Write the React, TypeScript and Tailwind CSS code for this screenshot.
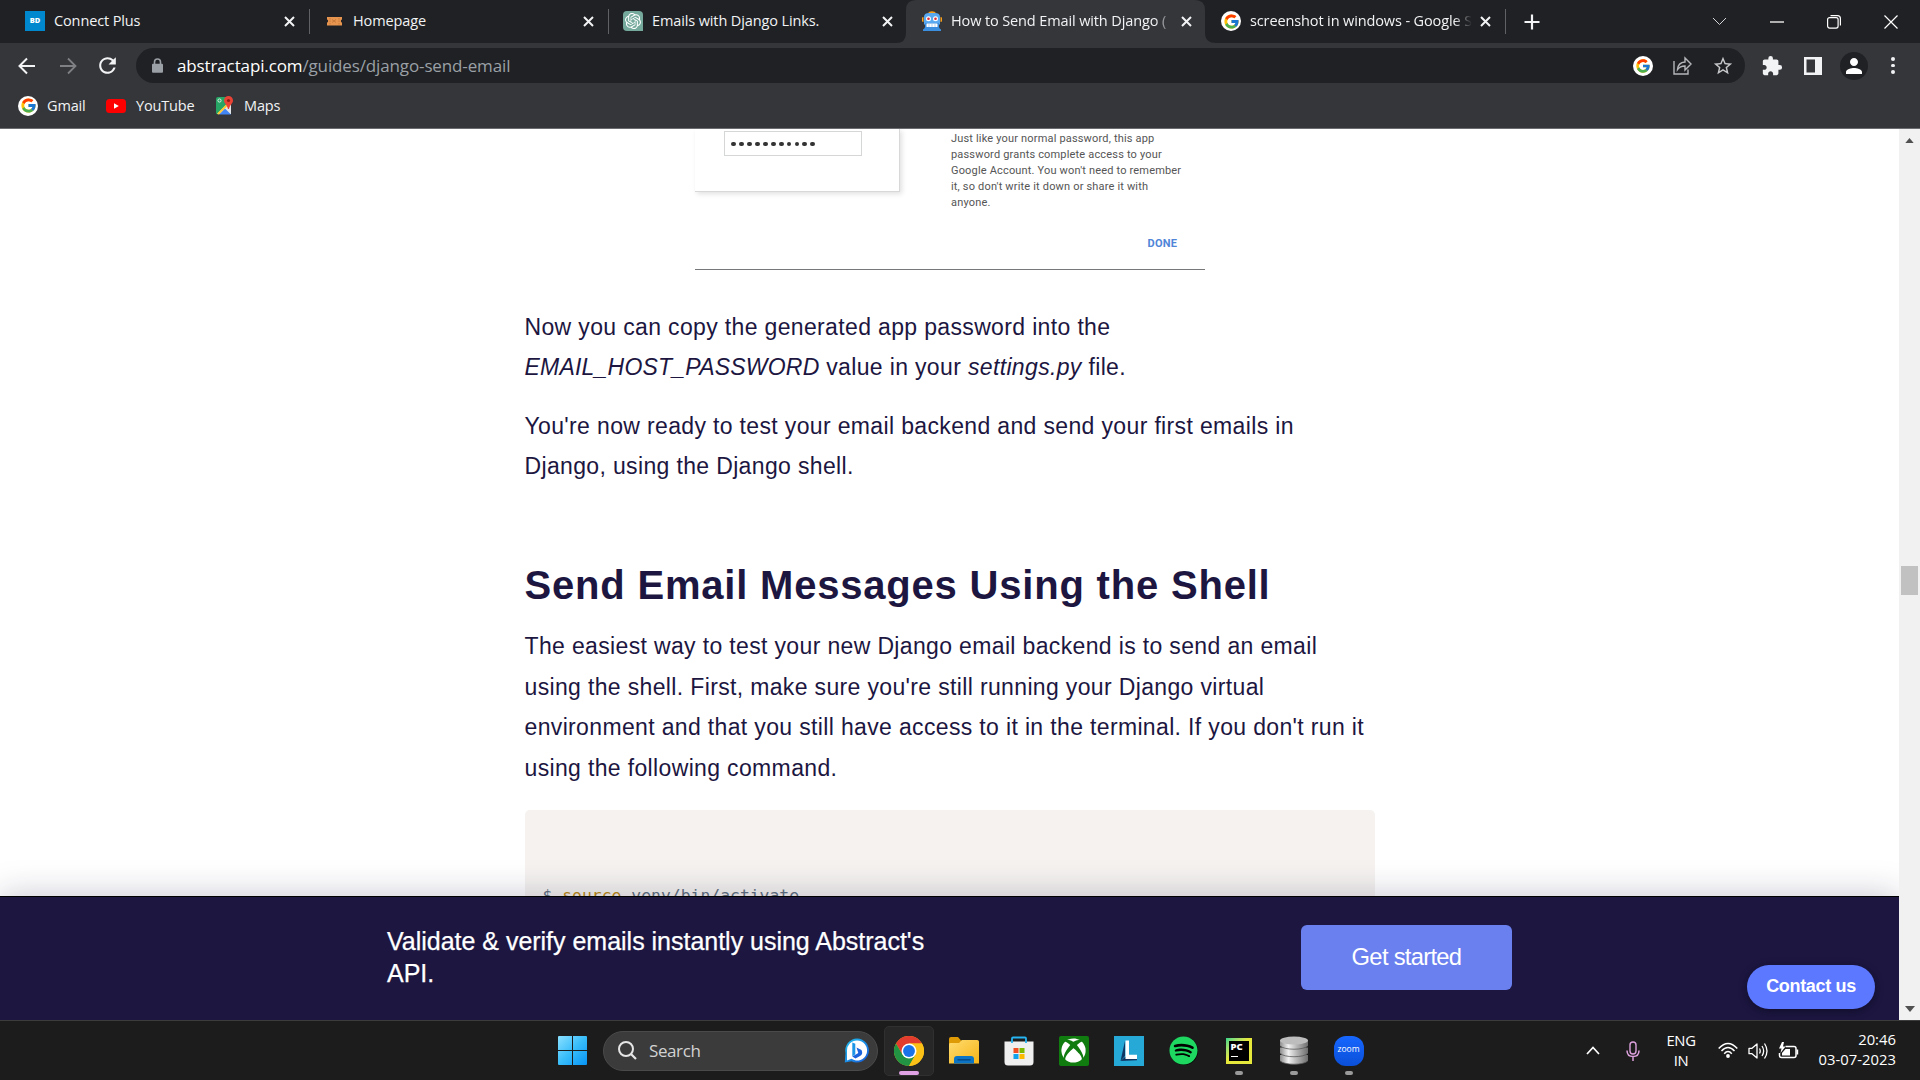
import React from 'react';
import { FcGoogle } from 'react-icons/fc';
import { SiOpenai } from 'react-icons/si';
import { FaXbox, FaSpotify } from 'react-icons/fa';
import { MdExtension, MdStarBorder, MdPerson, MdRefresh } from 'react-icons/md';

const GoogleBadge = ({ small }: { small?: boolean }) => (
  <span className="flex size-5 shrink-0 items-center justify-center rounded-full bg-white">
    <FcGoogle className={small ? 'size-[16px]' : 'size-[17px]'} />
  </span>
);

const TicketIcon = () => (
  <svg className="size-5 shrink-0" viewBox="0 0 20 20">
    <path d="M3 6h15v2.500a1.700 1.700 0 0 0 0 3.200v2.900H3v-2.900a1.700 1.700 0 0 0 0-3.200z" fill="#e8954f" />
    <path d="M6 7v7M15 7v7" stroke="#c77a3a" strokeDasharray="1.500 1" />
    <path d="M8 8.500l4 3M8 11.500l4-3" stroke="#c77a3a" />
  </svg>
);

const RobotIcon = () => (
  <svg className="size-5 shrink-0" viewBox="0 0 20 20">
    <path d="M6 2.500C7-.5 13-.5 14 2.500z" fill="#f9a01b" />
    <path d="M0 7q0-1 1.500-1v5Q0 11 0 10zM20 7q0-1-1.500-1v5q1.500 0 1.500-1z" fill="#f9a01b" />
    <path d="M2 6Q2 2 7 2h6q5 0 5 4v7l-2 2H4l-2-2z" fill="#58a9ef" />
    <path d="M3 12h14v4q0 1 2 2.500v1.500H1v-1.500Q3 17 3 16z" fill="#3c8ede" />
    <circle cx="6.500" cy="7.800" r="2.500" fill="#fff" />
    <circle cx="13.500" cy="7.800" r="2.500" fill="#fff" />
    <circle cx="6.500" cy="7.800" r="1.300" fill="#dd2a34" />
    <circle cx="13.500" cy="7.800" r="1.300" fill="#dd2a34" />
    <rect x="4.500" y="12.500" width="11" height="3.500" rx=".5" fill="#fff" />
    <path d="M7 12.500V16M10 12.500V16M13 12.500V16" stroke="#8fc0ee" strokeWidth=".7" />
  </svg>
);

const LockIcon = () => (
  <svg className="h-[15px] w-[17px]" viewBox="0 0 17 15">
    <path d="M5.500 6.500V4a3 3 0 0 1 6 0v2.500" fill="none" stroke="#9aa0a6" strokeWidth="1.600" />
    <rect x="3" y="5.800" width="11" height="9" rx="1" fill="#9aa0a6" />
  </svg>
);

const CloseIcon = () => (
  <svg className="size-[11px] shrink-0" viewBox="0 0 11 11">
    <path d="M1 1l9 9M10 1l-9 9" stroke="#f1f3f4" strokeWidth="2" />
  </svg>
);

type TabData = { title: string; icon: React.ReactNode; active?: boolean; fade?: boolean; sep?: boolean };

const tabs: TabData[] = [
  {
    title: 'Connect Plus',
    icon: <span className="flex size-5 shrink-0 items-center justify-center bg-[#0088ce] text-[7.5px] font-extrabold text-white">BD</span>,
    sep: true,
  },
  { title: 'Homepage', icon: <TicketIcon />, sep: true },
  {
    title: 'Emails with Django Links.',
    icon: (
      <span className="flex size-5 shrink-0 items-center justify-center rounded-[4px] rounded-br-none bg-[#75a99c]">
        <SiOpenai className="size-4 text-white" />
      </span>
    ),
  },
  { title: 'How to Send Email with Django (', icon: <RobotIcon />, active: true, fade: true },
  { title: 'screenshot in windows - Google S', icon: <GoogleBadge />, fade: true, sep: true },
];

const Tab = ({ t }: { t: TabData }) => (
  <div className="relative flex h-[43px] w-[299px] items-center pb-px pl-[14px]">
    {t.active && (
      <svg className="absolute -left-3 top-0 h-[43px] w-[322px]" viewBox="0 0 322 43">
        <path d="M0 43Q10 43 10 33V10Q10 0 20 0H299Q309 0 309 10V33Q309 43 320 43z" fill="#35363a" />
      </svg>
    )}
    <div className="relative flex w-full items-center">
      {t.icon}
      <span
        className={
          'ml-[9px] w-[223px] text-[14.5px] tracking-[-0.12px] whitespace-nowrap text-[#f1f3f4] ' +
          (t.fade ? '[mask-image:linear-gradient(to_right,#000_204px,transparent_222px)]' : '')
        }
      >
        {t.title}
      </span>
      <span className="ml-[7px] flex"><CloseIcon /></span>
    </div>
    {t.sep && <span className="absolute top-[9px] right-0 h-[25px] w-px bg-[#5f6165]" />}
  </div>
);

const TabStrip = () => (
  <div className="flex h-[43px] items-center justify-between bg-[#202124] pl-[11px]">
    <div className="flex items-center">
      {tabs.map((t) => (
        <Tab key={t.title} t={t} />
      ))}
      <svg className="ml-[18px] size-4" viewBox="0 0 16 16">
        <path d="M8 .5v15M.5 8h15" stroke="#f1f3f4" strokeWidth="2.200" />
      </svg>
    </div>
    <div className="flex h-9 items-center gap-[43px] pr-[22px]">
      <svg className="w-[15px]" viewBox="0 0 15 9"><path d="M1 1l6.500 6.500L14 1" stroke="#d5d6d8" fill="none" /></svg>
      <svg className="w-[14px]" viewBox="0 0 14 2"><path d="M0 1h14" stroke="#fff" strokeWidth="1.300" /></svg>
      <svg className="w-[14px]" viewBox="0 0 14 14">
        <rect x=".6" y="2.600" width="10.500" height="10.500" rx="2" stroke="#fff" strokeWidth="1.200" fill="none" />
        <path d="M3.500.6h7q2.900 0 2.900 2.900v7" stroke="#fff" strokeWidth="1.200" fill="none" />
      </svg>
      <svg className="w-[14px]" viewBox="0 0 14 14"><path d="M.5.5l13 13M13.500.5l-13 13" stroke="#fff" strokeWidth="1.200" /></svg>
    </div>
  </div>
);

const Toolbar = () => (
  <div className="flex h-[45px] items-center bg-[#35363a] pl-[18px]">
    <svg className="size-[18px]" viewBox="0 0 18 18"><path d="M17 9H2M9 1.500L1.500 9 9 16.500" stroke="#f1f3f4" strokeWidth="2" fill="none" /></svg>
    <svg className="ml-[23px] size-[18px]" viewBox="0 0 18 18"><path d="M1 9h15M9 1.500L16.500 9 9 16.500" stroke="#7f8084" strokeWidth="1.800" fill="none" /></svg>
    <MdRefresh className="ml-[18px] size-[25px] text-[#f1f3f4]" />
    <div className="ml-[16px] flex h-[35px] w-[1609px] items-center rounded-full bg-[#202124] pr-[11px] pl-[13px]">
      <LockIcon />
      <span className="ml-[11px] flex-1 text-[17px] tracking-[-0.13px] text-[#9aa0a6]">
        <span className="text-white">abstractapi.com</span>/guides/django-send-email
      </span>
      <GoogleBadge small />
      <svg className="ml-[20px] size-[19px]" viewBox="0 0 19 19">
        <path d="M1 5v13h14v-4.500M4.500 13.500Q5 6.500 12 6V2l6 6-6 6v-4Q7 10 4.500 13.500z" stroke="#b5b7ba" strokeWidth="1.400" fill="none" />
      </svg>
      <MdStarBorder className="ml-[20px] size-[22px] text-[#c6c8ca]" />
    </div>
    <MdExtension className="ml-[16px] size-[22px] text-[#f1f3f4]" />
    <svg className="ml-[21px] size-[18px]" viewBox="0 0 18 18">
      <path fillRule="evenodd" d="M0 0h18v18H0zM2.500 2.500v13H11v-13z" fill="#f1f3f4" />
    </svg>
    <span className="ml-[18px] flex size-7 items-center justify-center rounded-full bg-[#202124]">
      <MdPerson className="size-6 text-white" />
    </span>
    <span className="ml-[23px] flex flex-col gap-[3px]">
      <i className="size-[3.500px] rounded-full bg-[#f1f3f4]" />
      <i className="size-[3.500px] rounded-full bg-[#f1f3f4]" />
      <i className="size-[3.500px] rounded-full bg-[#f1f3f4]" />
    </span>
  </div>
);

const MapsIcon = () => (
  <svg className="size-[19px]" viewBox="0 0 19 19">
    <path d="M1 3q0-2 2-2h10v8L3 18.500q-2 0-2-2z" fill="#26a564" />
    <path d="M2 18L16 4v14z" fill="#e3e6e8" />
    <path d="M4 18.500l6-6 6 6z" fill="#4285f4" />
    <path d="M3 18l13-13" stroke="#fcc934" strokeWidth="2" />
    <path d="M13.500 0a4.500 4.500 0 0 1 4.500 4.500c0 3-3 4-4 8.500h-1c-1-4.500-4-5.500-4-8.500A4.500 4.500 0 0 1 13.500 0z" fill="#e94335" />
    <circle cx="13.500" cy="4.500" r="1.600" fill="#8f1d14" />
    <circle cx="4.500" cy="4.500" r="1.600" fill="none" stroke="#fff" strokeWidth=".8" />
  </svg>
);

const Bookmarks = () => (
  <div className="flex h-[41px] items-center border-b border-[#6b6c6f] bg-[#35363a] pb-[5px] pl-[18px] text-[14.500px] tracking-[-0.15px] text-[#f1f3f4]">
    <GoogleBadge />
    <span className="ml-[9px] w-[59px]">Gmail</span>
    <svg className="w-5" viewBox="0 0 20 14"><rect width="20" height="14" rx="3.500" fill="#f00" /><path d="M8 4.300v5.400L12.800 7z" fill="#fff" /></svg>
    <span className="ml-[10px] w-[79px]">YouTube</span>
    <MapsIcon />
    <span className="ml-[10px]">Maps</span>
  </div>
);

const PasswordDialog = () => (
  <div className="ml-[695px] flex h-[141px] w-[510px] items-start border-b-[1.500px] border-[#77787a]">
    <div className="h-[63px] w-[205px] shrink-0 border-r border-b border-[#d8d8d8] pt-[2px] pl-[29px] shadow-[2px_2px_5px_rgba(0,0,0,0.12)]">
      <div className="flex h-[25px] w-[138px] items-center gap-[3.050px] border border-[#d4d7d6] pt-px pl-[6px]">
        {Array.from({ length: 11 }, (_, i) => (
          <i key={i} className="size-[4.900px] rounded-full bg-[#333]" />
        ))}
      </div>
    </div>
    <div className="ml-[51px] flex-1 pt-[2px] font-[Roboto] text-[11px] leading-[15.900px] tracking-[0.175px] text-[#555]">
      Just like your normal password, this app
      <br />
      password grants complete access to your
      <br />
      Google Account. You won't need to remember
      <br />
      it, so don't write it down or share it with
      <br />
      anyone.
      <div className="mt-[25px] pr-[28px] text-right font-bold text-[#5085d8]">DONE</div>
    </div>
  </div>
);

const Article = () => (
  <div className="ml-[524.500px] w-[850px] pt-[36.600px] text-[23px] leading-[40.400px] tracking-[0.35px] text-[#1c1641]">
    <p>
      Now you can copy the generated app password into the
      <br />
      <em className="tracking-[0.210px]">EMAIL_HOST_PASSWORD</em> value in your <em>settings.py</em> file.
    </p>
    <p className="mt-[18.200px]">
      You're now ready to test your email backend and send your first emails in
      <br />
      Django, using the Django shell.
    </p>
    <h2 className="mt-[74px] text-[40px] leading-[50px] font-bold tracking-[0.8px]">Send Email Messages Using the Shell</h2>
    <p className="mt-[16px]">
      The easiest way to test your new Django email backend is to send an email
      <br />
      using the shell. First, make sure you're still running your Django virtual
      <br />
      environment and that you still have access to it in the terminal. If you don't run it
      <br />
      using the following command.
    </p>
    <pre className="mt-[22px] h-[200px] rounded-[5px] bg-[#f5f2f0] pt-[74px] pl-[18px] font-['DejaVu_Sans_Mono'] text-[16.400px] leading-[24px] tracking-normal text-[#5f7080]">
      $ <span className="text-[#bd8a14]">source</span> venv/bin/activate
    </pre>
  </div>
);

const Banner = () => (
  <div className="absolute inset-x-0 bottom-0 flex h-[124px] items-start border-t border-black bg-[#1c1641] pl-[387px] text-white shadow-[0_0_32px_rgba(28,22,65,0.25)]">
    <p className="mt-[28px] w-[560px] text-[25px] leading-[32px] tracking-[-0.015px] [-webkit-text-stroke:0.25px_white]">
      Validate &amp; verify emails instantly using Abstract's
      <br />
      API.
    </p>
    <button className="mt-[28px] ml-[354px] h-[65px] w-[211px] rounded-[6px] bg-[#6a80ef] pb-[2px] text-[23.750px] tracking-[-0.700px]">Get started</button>
    <button className="mt-[68px] ml-[235px] h-[44px] w-[128px] rounded-full bg-[#5c78ff] pb-[2px] text-[18px] font-bold tracking-[-0.330px] shadow-[0_2px_8px_rgba(0,0,0,0.4)]">Contact us</button>
  </div>
);

const Scrollbar = () => (
  <div className="flex h-full w-[21px] flex-col items-center bg-[#f1f1f1]">
    <svg className="mt-[9px] w-[9px]" viewBox="0 0 10 6"><path d="M0 6L5 0l5 6z" fill="#505050" /></svg>
    <div className="mt-[423px] h-[29px] w-[17px] bg-[#c1c1c1]" />
    <svg className="mt-auto mb-[8px] w-[10px]" viewBox="0 0 10 6"><path d="M0 0l5 6 5-6z" fill="#505050" /></svg>
  </div>
);

const WindowsLogo = () => (
  <svg className="size-[29px]" viewBox="0 0 29 29">
    <defs>
      <linearGradient id="win" x1="0" y1="0" x2="29" y2="29" gradientUnits="userSpaceOnUse">
        <stop stopColor="#8be0ff" /><stop offset=".5" stopColor="#38bdfa" /><stop offset="1" stopColor="#0793f5" />
      </linearGradient>
    </defs>
    <path d="M0 1q0-1 1-1h13v14H0zM15 0h13q1 0 1 1v13H15zM0 15h14v14H1q-1 0-1-1zM15 15h14v13q0 1-1 1H15z" fill="url(#win)" />
  </svg>
);

const ChromeLogo = () => (
  <svg className="size-[30px]" viewBox="0 0 48 48">
    <circle cx="24" cy="24" r="24" fill="#fbc116" />
    <path d="M24 24L13.600 30 3.200 12A24 24 0 0 1 44.800 12H24z" fill="#e33b2e" />
    <path d="M13.600 30L3.200 12A24 24 0 0 0 24 48l10.400-18L24 24z" fill="#229342" />
    <path d="M34.400 30L24 48A24 24 0 0 0 44.800 12H24z" fill="#fbc116" />
    <circle cx="24" cy="24" r="12" fill="#fff" />
    <circle cx="24" cy="24" r="9.500" fill="#1a73e8" />
  </svg>
);

const BingLogo = () => (
  <svg className="size-[25px]" viewBox="0 0 25 25">
    <defs>
      <linearGradient id="bing" x1="0" y1="0" x2="1" y2="1"><stop stopColor="#22c4f0" /><stop offset="1" stopColor="#1556d8" /></linearGradient>
    </defs>
    <path d="M13 .5A12 12 0 1 1 7.500 23.200L.8 24.500 1.500 15A12 12 0 0 1 13 .5z" fill="url(#bing)" />
    <path d="M13 2.500a10 10 0 1 1-5.500 18.300L3 22.500V13A10 10 0 0 1 13 2.500z" fill="#fff" />
    <path d="M8.300 4.500l3 1.200v10.500L8.300 18.500z" fill="#1b96e6" />
    <path d="M12.500 9.500l5 2.500q2 4-1.500 6l-4.500 2.500-3.200-2 6-3.500z" fill="#1a63dc" />
  </svg>
);

const FolderIcon = () => (
  <svg className="h-[27px] w-[30px]" viewBox="0 0 30 27">
    <defs><linearGradient id="folder" x1="0" y1="0" x2="1" y2="1"><stop stopColor="#ffdc70" /><stop offset="1" stopColor="#f6b416" /></linearGradient></defs>
    <path d="M0 2q0-2 2-2h7l3 3.500h16q2 0 2 2V10H0z" fill="#df9b06" />
    <path d="M0 8q0-2 1-2h9l3-3h15q2 0 2 2v21.500H0z" fill="url(#folder)" />
    <path d="M5 26.500V22q0-3 3-3h14q3 0 3 3v4.500z" fill="#0b74c5" />
    <path d="M8.500 22.800h13" stroke="#064b87" strokeWidth="1.500" />
  </svg>
);

const StoreIcon = () => (
  <svg className="size-[30px]" viewBox="0 0 30 30">
    <path d="M.5 5.500h29V26q0 3.500-3.500 3.500H4Q.5 29.500.5 26z" fill="#efefef" />
    <path d="M8 7V2.500Q8 1.500 9 1.500h12q1 0 1 1V7" fill="none" stroke="#26b4f2" strokeWidth="1.800" />
    <rect x="9.500" y="12" width="5" height="5" fill="#f04e23" /><rect x="15.500" y="12" width="5" height="5" fill="#7db900" />
    <rect x="9.500" y="18" width="5" height="5" fill="#0fa2ed" /><rect x="15.500" y="18" width="5" height="5" fill="#fbb900" />
  </svg>
);

const LIcon = () => (
  <svg className="size-[30px]" viewBox="0 0 30 30">
    <rect width="30" height="30" fill="#27a9d8" />
    <path d="M11 5v15L6.500 25z" fill="#103763" />
    <path d="M6.500 25l4.500-4h12v3.200z" fill="#103763" />
    <path d="M11.500 4.500H15v14.300h8V23H11.500z" fill="#fff" />
  </svg>
);

const PyCharmIcon = () => (
  <div className="flex size-[26px] items-center justify-center bg-linear-to-br from-[#21d789] via-[#e6e83a] via-45% to-[#e5e93c]">
    <div className="h-[20px] w-[20px] bg-black pl-[2px] font-['Open_Sans'] text-[9.500px] leading-[12px] font-extrabold text-white">
      PC
      <div className="mt-[3px] h-[1.500px] w-[7px] bg-white" />
    </div>
  </div>
);

const DatabaseIcon = () => (
  <svg className="h-[29px] w-[30px]" viewBox="0 0 30 29">
    <defs><linearGradient id="db"><stop stopColor="#8c8c8c" /><stop offset=".3" stopColor="#f2f2f2" /><stop offset=".6" stopColor="#b5b5b5" /><stop offset="1" stopColor="#6e6e6e" /></linearGradient></defs>
    {[19, 11.500, 4].map((y) => (
      <g key={y} transform={`translate(1 ${y})`}>
        <path d="M0 0v5.500C3 10.500 25 10.500 28 5.500V0z" fill="url(#db)" />
        <path d="M.5 6C4 10.300 24 10.300 27.500 6" fill="none" stroke="#5a5a5a" strokeWidth=".8" />
      </g>
    ))}
    <ellipse cx="15" cy="4.500" rx="14" ry="4" fill="#bdbdbd" />
  </svg>
);

const apps = [
  { id: 'folder', icon: <FolderIcon /> },
  { id: 'store', icon: <StoreIcon /> },
  { id: 'xbox', icon: <span className="flex size-[30px] items-center justify-center rounded-[2px] bg-[#107c10]"><FaXbox className="size-[25px] text-white" /></span> },
  { id: 'l', icon: <LIcon /> },
  { id: 'spotify', icon: <span className="flex size-[28px] items-center justify-center rounded-full bg-black"><FaSpotify className="size-[29px] shrink-0 text-[#1ed760]" /></span> },
  { id: 'pycharm', icon: <PyCharmIcon />, running: true },
  { id: 'db', icon: <DatabaseIcon />, running: true },
  { id: 'zoom', icon: <span className="flex size-[30px] items-center justify-center rounded-[12px] bg-linear-to-b from-[#1767ff] to-[#0a4fd8] pb-[2px] text-[8.500px] font-medium text-white">zoom</span>, running: true },
];

const Tray = () => (
  <div className="flex flex-1 items-center justify-end pr-[24px] text-[14.800px] leading-[20px] text-white">
    <svg className="w-[14px]" viewBox="0 0 14 9"><path d="M1 8l6-6.500L13 8" stroke="#fff" strokeWidth="1.700" fill="none" /></svg>
    <svg className="ml-[26px] h-[20px] w-[14px]" viewBox="0 0 14 20">
      <rect x="4" y="1" width="6" height="12" rx="3" fill="none" stroke="#dba0dc" strokeWidth="1.400" />
      <path d="M1 9.500Q1 15.500 7 15.500T13 9.500M7 15.500V20" fill="none" stroke="#dba0dc" strokeWidth="1.500" />
    </svg>
    <div className="ml-[26px] w-[30px] pb-px text-center tracking-[-0.3px]">ENG<br />IN</div>
    <svg className="ml-[22px] h-[17px] w-[20px]" viewBox="0 0 20 17">
      <path d="M.7 6.500Q10-3.500 19.300 6.500M3.500 9Q10 2 16.500 9M6.200 11.700Q10 7.500 13.800 11.700" fill="none" stroke="#fff" strokeWidth="1.500" />
      <circle cx="10" cy="14" r="1.900" fill="#fff" />
    </svg>
    <svg className="ml-[10px] h-[18px] w-[20px]" viewBox="0 0 20 18">
      <path d="M1 6.300h3L9 2v14l-5-4.300H1z" fill="none" stroke="#fff" strokeWidth="1.300" strokeLinejoin="round" />
      <path d="M11.500 6.500q1.500 2.500 0 5M14 4q3.300 5 0 10M16.500 1.500q5 7.500 0 15" fill="none" stroke="#fff" strokeWidth="1.300" />
    </svg>
    <svg className="ml-[10px] h-[18px] w-[21px]" viewBox="0 0 21 18">
      <path d="M7.500 4.500H16q2 0 2 2v7q0 2-2 2H3.500q-2 0-2-2V11" fill="none" stroke="#fff" strokeWidth="1.500" />
      <path d="M18.500 7.500h1.700v5h-1.700z" fill="#fff" />
      <path d="M7.500 7H12v6.500H4V11z" fill="#fff" />
      <path d="M4 0L1 6.500h2.500L2.500 11 7.500 4.500H5L6 0z" fill="#fff" />
    </svg>
    <div className="ml-[19px] w-[78px] pb-[3px] text-right tracking-[0.020px]">20:46<br />03-07-2023</div>
  </div>
);

const Taskbar = () => (
  <div className="flex h-[60px] items-center border-t border-[#3c3c3d] bg-[#1c1c1c] pl-[558px]">
    <WindowsLogo />
    <div className="ml-[16px] flex h-[40px] w-[275px] items-center rounded-full border border-[#4a4a4a] bg-[#3b3b3b] pr-[8px] pl-[14px]">
      <svg className="size-[19px]" viewBox="0 0 19 19"><circle cx="8" cy="8" r="7" fill="none" stroke="#e6e6e6" strokeWidth="2" /><path d="M13 13l5 5" stroke="#e6e6e6" strokeWidth="2.200" /></svg>
      <span className="ml-[12px] flex-1 text-[17px] tracking-[-0.400px] text-[#d2d2d2]">Search</span>
      <BingLogo />
    </div>
    <div className="relative ml-[6px] flex size-[50px] items-center justify-center rounded-[5px] border border-[#303030] bg-[#272727]">
      <ChromeLogo />
      <span className="absolute bottom-0 h-[4px] w-[20px] rounded-full bg-[#dfa0e4]" />
    </div>
    <div className="flex pl-[2px]">
      {apps.map((a) => (
        <div key={a.id} className="relative flex h-[50px] w-[55px] items-center justify-center">
          {a.icon}
          {a.running && <span className="absolute bottom-[1px] h-[4px] w-[8px] rounded-full bg-[#9a9a9a]" />}
        </div>
      ))}
    </div>
    <Tray />
  </div>
);

export default function App() {
  return (
    <div className="flex h-[1080px] w-[1920px] flex-col overflow-hidden bg-white font-['Open_Sans',sans-serif]">
      <TabStrip />
      <Toolbar />
      <Bookmarks />
      <div className="flex h-[891px]">
        <div className="relative h-full w-[1899px] overflow-hidden font-['Liberation_Sans',sans-serif]">
          <PasswordDialog />
          <Article />
          <Banner />
        </div>
        <Scrollbar />
      </div>
      <Taskbar />
    </div>
  );
}
